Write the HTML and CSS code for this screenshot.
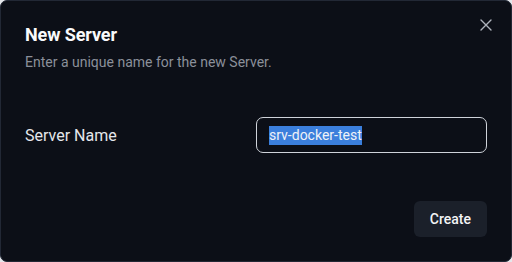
FILE: index.html
```html
<!DOCTYPE html>
<html lang="en">
<head>
<meta charset="utf-8">
<title>New Server</title>
<link rel="stylesheet" href="styles.css">
</head>
<body>
<div class="dialog" role="dialog" aria-labelledby="dlg-title">
  <button class="close" aria-label="Close">
    <svg width="12" height="12" viewBox="0 0 12 12" fill="none" stroke="currentColor" stroke-width="1.4" stroke-linecap="round"><path d="M1 1L11 11M11 1L1 11"/></svg>
  </button>
  <div class="header">
    <h2 id="dlg-title" class="title">New Server</h2>
    <p class="desc">Enter a unique name for the new Server.</p>
  </div>
  <div class="form-row">
    <label class="label" for="name">Server Name</label>
    <div class="input"><span class="sel">srv-docker-test</span></div>
  </div>
  <div class="footer">
    <button class="btn">Create</button>
  </div>
</div>
</body>
</html>
```
FILE: styles.css
```css
* { box-sizing: border-box; }
html, body { margin: 0; padding: 0; background: #e5e7eb; }
body { font-family: Roboto, "Noto Sans", sans-serif; width: 512px; height: 262px; }
.dialog {
  position: relative;
  width: 512px;
  height: 262px;
  background: #0c0f17;
  border: 1px solid #222835;
  border-radius: 7px;
  padding: 23px 24px 24px;
  display: flex;
  flex-direction: column;
  color: #f3f4f6;
}
.close {
  position: absolute;
  top: 18px;
  right: 19px;
  background: none;
  border: 0;
  padding: 0;
  color: #aeb3bc;
  display: flex;
}
.header { display: flex; flex-direction: column; gap: 6px; }
.title { margin: 0; font-size: 18px; font-weight: 700; line-height: 22px; color: #f9fafb; letter-spacing: -0.1px; }
.desc { margin: 0; font-size: 14px; line-height: 20px; color: #8b909a; }
.form-row {
  display: grid;
  grid-template-columns: 1fr 1fr;
  align-items: center;
  margin-top: 45px;
}
.label { font-size: 16px; color: #e5e7eb; }
.input {
  height: 36px;
  border: 1px solid #cfd3da;
  border-radius: 7px;
  padding: 0 12px;
  display: flex;
  align-items: center;
  font-size: 14px;
}
.sel { background: #3b7fdc; color: #eef2f8; line-height: 19px; }
.footer { margin-top: auto; display: flex; justify-content: flex-end; }
.btn {
  height: 36px;
  padding: 0 16px;
  background: #1b202a;
  color: #f3f4f6;
  border: 0;
  border-radius: 6px;
  font-family: inherit;
  font-size: 14px;
  font-weight: 500;
}
```
